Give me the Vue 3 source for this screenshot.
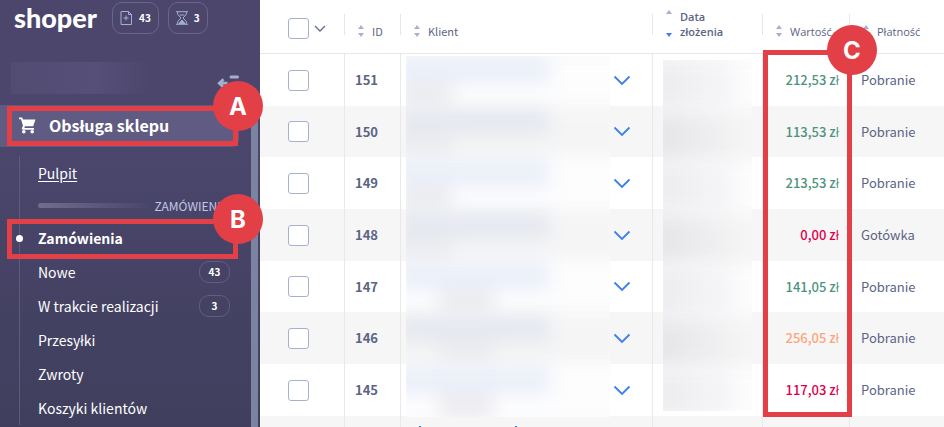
<script setup>
import { ref } from 'vue'

const orders = ref([
  { id: 151, value: '212,53 zł', tone: 'paid', payment: 'Pobranie' },
  { id: 150, value: '113,53 zł', tone: 'paid', payment: 'Pobranie' },
  { id: 149, value: '213,53 zł', tone: 'paid', payment: 'Pobranie' },
  { id: 148, value: '0,00 zł', tone: 'unpaid', payment: 'Gotówka' },
  { id: 147, value: '141,05 zł', tone: 'paid', payment: 'Pobranie' },
  { id: 146, value: '256,05 zł', tone: 'partial', payment: 'Pobranie' },
  { id: 145, value: '117,03 zł', tone: 'unpaid', payment: 'Pobranie' },
])

const columns = [
  { key: 'id', label: 'ID' },
  { key: 'client', label: 'Klient' },
  { key: 'date', label: 'Data złożenia', sorted: true },
  { key: 'value', label: 'Wartość', accented: true },
  { key: 'payment', label: 'Płatność', accented: true },
]

const links = [
  { label: 'Nowe', count: 43 },
  { label: 'W trakcie realizacji', count: 3 },
  { label: 'Przesyłki' },
  { label: 'Zwroty' },
  { label: 'Koszyki klientów' },
]
</script>

<template>
  <div class="app">
    <aside class="sidebar">
      <header class="topbar">
        <a class="logo" href="#">shoper</a>
        <button class="pill" type="button" aria-label="Nowe zamówienia">
          <svg width="13" height="14" viewBox="0 0 13 14" fill="none" stroke="#a4aed2">
            <path d="M1.500.5h7l3 3v10h-10.500v-13z" />
            <path d="M8.500.5v3h3M6 4.500v5M3.500 7h5" />
          </svg>
          <span>43</span>
        </button>
        <button class="pill" type="button" aria-label="W realizacji">
          <svg width="12" height="14" viewBox="0 0 12 14" fill="none" stroke="#a4aed2">
            <path d="M0 .7h12M0 13.300h12M1.700 1v2.500L5 7 1.700 10.500V13M10.300 1v2.500L7 7l3.300 3.500V13M3.500 4h5" />
            <path d="M3 12.500l3-3.500 3 3.500z" fill="#a4aed2" />
          </svg>
          <span>3</span>
        </button>
      </header>

      <div class="account">
        <div class="account-name"></div>
        <button class="collapse" type="button" aria-label="Zwiń menu">
          <svg width="23" height="18" viewBox="0 0 23 18" fill="none" stroke="#a3aed0" stroke-width="3">
            <path d="M14 2h6.500" stroke-linecap="round" />
            <path d="M14 14h6.500" stroke-linecap="round" />
            <path d="M6.500 4.200L2.300 8.200l4.200 4M2.500 8.200h8" stroke-width="2.800" />
          </svg>
        </button>
      </div>

      <div class="menu">
        <nav class="nav">
          <a class="section" href="#">
            <svg width="17" height="17" viewBox="0 0 17 17" fill="#fff">
              <path d="M0 .5h3.200l.8 2h12.500l-2.300 6.800H6l-.7 1.700h9.700v1.800H4.200c-1.200 0-1.800-.9-1.200-2l1-2L2 2.300H0z" />
              <circle cx="4.800" cy="14.700" r="1.800" />
              <circle cx="13.200" cy="14.700" r="1.800" />
            </svg>
            <span>Obsługa sklepu</span>
            <span class="mark"><b>A</b></span>
          </a>
          <div class="submenu">
            <a class="item underlined" href="#"><span>Pulpit</span></a>
            <div class="group"><i></i><span>ZAMÓWIENIA</span></div>
            <a class="item current" href="#">
              <span>Zamówienia</span>
              <span class="mark"><b>B</b></span>
            </a>
            <a v-for="link in links" :key="link.label" class="item" href="#">
              <span>{{ link.label }}</span>
              <span v-if="link.count" class="count">{{ link.count }}</span>
            </a>
          </div>
        </nav>
        <div class="track"></div>
      </div>
    </aside>

    <main class="content">
      <table class="orders">
        <colgroup>
          <col class="c-check" /><col class="c-id" /><col class="c-client" />
          <col class="c-date" /><col class="c-value" /><col />
        </colgroup>
        <thead>
          <tr>
            <th class="check">
              <div class="check-all">
                <input type="checkbox" aria-label="Zaznacz wszystkie" />
                <button type="button" aria-label="Opcje zaznaczania">
                  <svg width="12" height="8" viewBox="0 0 12 8" fill="none" stroke="#626b8d" stroke-width="1.300">
                    <path d="M1 1l5 5 5-5" />
                  </svg>
                </button>
              </div>
            </th>
            <th v-for="column in columns" :key="column.key" class="sortable">
              <button class="sort" :class="{ sorted: column.sorted, accented: column.accented }" type="button">
                <span class="arrows"><i class="up"></i><i class="down"></i></span>
                <span class="label">{{ column.label }}</span>
              </button>
            </th>
          </tr>
        </thead>
        <tbody>
          <tr v-for="order in orders" :key="order.id">
            <td class="check"><input type="checkbox" :aria-label="'Zamówienie ' + order.id" /></td>
            <td class="id">{{ order.id }}</td>
            <td class="client">
              <button type="button" aria-label="Rozwiń">
                <svg width="18" height="11" viewBox="0 0 18 11" fill="none" stroke="#3d7ff0" stroke-width="1.800">
                  <path d="M1.500 1.500L9 9l7.500-7.500" />
                </svg>
              </button>
            </td>
            <td></td>
            <td class="value" :class="order.tone">{{ order.value }}</td>
            <td class="payment">{{ order.payment }}</td>
          </tr>
          <tr>
            <td></td><td></td>
            <td class="peek"><div><i></i><i></i></div></td>
            <td></td><td></td><td></td>
          </tr>
        </tbody>
      </table>

      <div class="haze haze-client">
        <div v-for="order in orders" :key="order.id" class="band"><i></i><s></s></div>
      </div>
      <div class="haze haze-date">
        <div v-for="order in orders" :key="order.id" class="band"><i></i></div>
      </div>
      <div class="mark mark-column"><b>C</b></div>
    </main>
  </div>
</template>

<style>
body {
  background: #fff;
  overflow: hidden;
}
</style>

<style scoped>
* {
  box-sizing: border-box;
}
.app {
  display: flex;
  height: 100vh;
  overflow: hidden;
  font-family: "Noto Sans CJK SC", "Open Sans", sans-serif;
  font-size: 14px;
  line-height: 20px;
  color: #5c6484;
}
a {
  color: inherit;
  text-decoration: none;
}
button {
  padding: 0;
  border: 0;
  background: none;
  font: inherit;
  color: inherit;
}
svg {
  display: block;
  flex: none;
}

.sidebar {
  position: relative;
  z-index: 1;
  display: flex;
  flex-direction: column;
  flex: 0 0 260px;
  background: linear-gradient(#4c466d 0, #4c466d 30%, #3f3f5d 100%);
  color: #fff;
}
.topbar {
  display: flex;
  align-items: center;
  height: 36px;
  padding: 0 14px;
}
.logo {
  width: 98px;
  font-family: Lato, sans-serif;
  font-size: 27px;
  font-weight: 900;
  line-height: 32px;
}
.pill {
  display: flex;
  align-items: center;
  gap: 6px;
  height: 32px;
  margin-right: 9px;
  padding: 0 7px;
  border: 1px solid #69648a;
  border-radius: 10px;
  font-size: 10px;
  font-weight: 700;
}
.account {
  display: flex;
  justify-content: space-between;
  padding: 26px 20px 11px 11px;
}
.account-name {
  width: 140px;
  height: 32px;
  background: linear-gradient(90deg, #524c73, #565079 60%, #4c466d);
}
.collapse {
  align-self: flex-end;
  height: 20px;
}
.menu {
  display: flex;
  flex: 1;
  padding-right: 2px;
}
.nav {
  flex: 1;
}
.track {
  width: 7px;
  background: #7a83a0;
}
.section {
  position: relative;
  display: flex;
  align-items: center;
  gap: 13px;
  height: 42px;
  margin-right: 12px;
  padding: 0 0 2px 19px;
  border-radius: 0 8px 8px 0;
  background: #605b82;
  font-size: 16px;
  font-weight: 700;
}
.submenu {
  margin: 9px 0 0 19px;
  padding-left: 18px;
  border-left: 1px solid #5f5b7d;
}
.item {
  position: relative;
  display: flex;
  align-items: center;
  justify-content: space-between;
  height: 34px;
  padding-right: 21px;
}
.underlined {
  text-decoration: underline;
  text-underline-offset: 2px;
}
.current {
  font-weight: 700;
}
.current::before {
  content: "";
  position: absolute;
  left: -22px;
  width: 7px;
  height: 7px;
  border-radius: 50%;
  background: #fff;
}
.count {
  width: 31px;
  border: 1px solid #615e80;
  border-radius: 10px;
  font-size: 10px;
  font-weight: 700;
  text-align: center;
}
.group {
  display: flex;
  align-items: center;
  gap: 4px;
  height: 31px;
  padding-right: 23px;
  font-size: 12px;
  color: #c3c7e6;
}
.group i {
  flex: 1;
  height: 5px;
  border-radius: 3px;
  background: linear-gradient(90deg, #706d8e, #4a456a);
}

.mark {
  position: absolute;
  border: 5px solid #e23f46;
  pointer-events: none;
}
.mark b {
  position: absolute;
  top: -30px;
  right: -30px;
  width: 50px;
  padding-top: 2px;
  border-radius: 50%;
  background: #e23f46;
  color: #fff;
  font-family: Inter, sans-serif;
  font-size: 24px;
  font-weight: 700;
  line-height: 48px;
  text-align: center;
}
.section .mark {
  inset: 1px 1px 1px 7px;
}
.current .mark {
  inset: -2px 13px -4px -31px;
}
.mark-column {
  left: 503px;
  top: 50px;
  width: 89px;
  height: 367px;
}

.content {
  position: relative;
  flex: 1;
  min-width: 0;
  overflow: hidden;
}
.orders {
  width: 100%;
  table-layout: fixed;
  border-spacing: 0;
}
.c-check { width: 84px; }
.c-id { width: 56px; }
.c-client { width: 252px; }
.c-date { width: 110px; }
.c-value { width: 87px; }
th {
  height: 54px;
  padding: 0;
  border-bottom: 1px solid #e6e6e8;
  font-weight: 400;
  text-align: left;
  vertical-align: top;
}
.check {
  padding: 0 0 0 28px;
}
.check-all {
  display: flex;
  align-items: center;
  gap: 5px;
  padding-top: 18px;
}
input {
  display: block;
  appearance: none;
  width: 21px;
  height: 21px;
  margin: 0;
  border: 1px solid #a7b1cf;
  border-radius: 3px;
  background: #fff;
}
.sortable {
  background: linear-gradient(#e6e6e8, #e6e6e8) 0 14px / 1px 21px no-repeat;
}
.sort {
  display: flex;
  align-items: flex-end;
  gap: 8px;
  height: 39px;
  padding-left: 14px;
  font-size: 11px;
  line-height: 15px;
  text-align: left;
}
.accented,
.sorted {
  font-family: "Open Sans", sans-serif;
}
.label {
  max-width: 60px;
}
.arrows {
  display: flex;
  flex-direction: column;
  justify-content: space-between;
  height: 14px;
  padding-bottom: 2px;
}
.sorted .arrows {
  height: 29px;
}
.up,
.down {
  border: 3px solid transparent;
}
.up {
  border-top: 0;
  border-bottom: 4px solid #a7b1cf;
}
.down {
  border-bottom: 0;
  border-top: 4px solid #a7b1cf;
}
.sorted {
  font-weight: 600;
}
.sorted .down {
  border-top-color: #3d7ff0;
}
td {
  height: 52px;
  padding: 0;
  font-size: 13px;
}
tr:nth-child(3n + 2) td {
  height: 51px;
}
tbody tr:nth-child(even) {
  background: #f6f6f6;
}
td + td {
  border-left: 1px solid #e9e9eb;
}
td.check {
  padding-left: 28px;
}
.id {
  padding-left: 10px;
  font-weight: 700;
}
.client button {
  display: block;
  margin: 0 21px 0 auto;
}
.value {
  padding-right: 10px;
  font-weight: 500;
  text-align: right;
}
.payment {
  padding-left: 11px;
}
.paid { color: #4f937d; }
.unpaid { color: #e0004d; }
.partial { color: #ffa37a; }
.peek {
  vertical-align: top;
}
.peek div {
  display: flex;
  gap: 94px;
  padding: 10px 0 0 18px;
}
.peek i {
  width: 2px;
  height: 1px;
  background: #2f86d8;
}

.haze {
  position: absolute;
  overflow: hidden;
  background: #fafafb;
}
.haze-client {
  left: 146px;
  top: 56px;
  width: 204px;
  height: 361px;
}
.haze-date {
  left: 403px;
  top: 60px;
  width: 89px;
  height: 351px;
}
.band {
  display: flex;
  flex-direction: column;
  height: 52px;
  margin: 0 -20px;
  padding-left: 10px;
  background: #fdfdfe;
  filter: blur(9px);
}
.band:nth-child(even) {
  background: #f5f5f6;
}
.band:nth-child(3n + 2) {
  height: 51px;
}
.band i {
  width: 154px;
  height: 28px;
  background: #eaeff9;
}
.band:nth-child(even) i {
  background: #e5e8ef;
}
.band s {
  width: 56px;
  height: 24px;
  background: #ededf0;
}
.band:nth-child(n + 5) s {
  margin-left: 42px;
}
.haze-date .band i {
  width: 84px;
  height: 48px;
  background: linear-gradient(90deg, #ebebee, #f7f7f9);
}
.haze-date .band:nth-child(even) i {
  background: linear-gradient(90deg, #e4e4e7, #f3f3f4);
}
</style>
